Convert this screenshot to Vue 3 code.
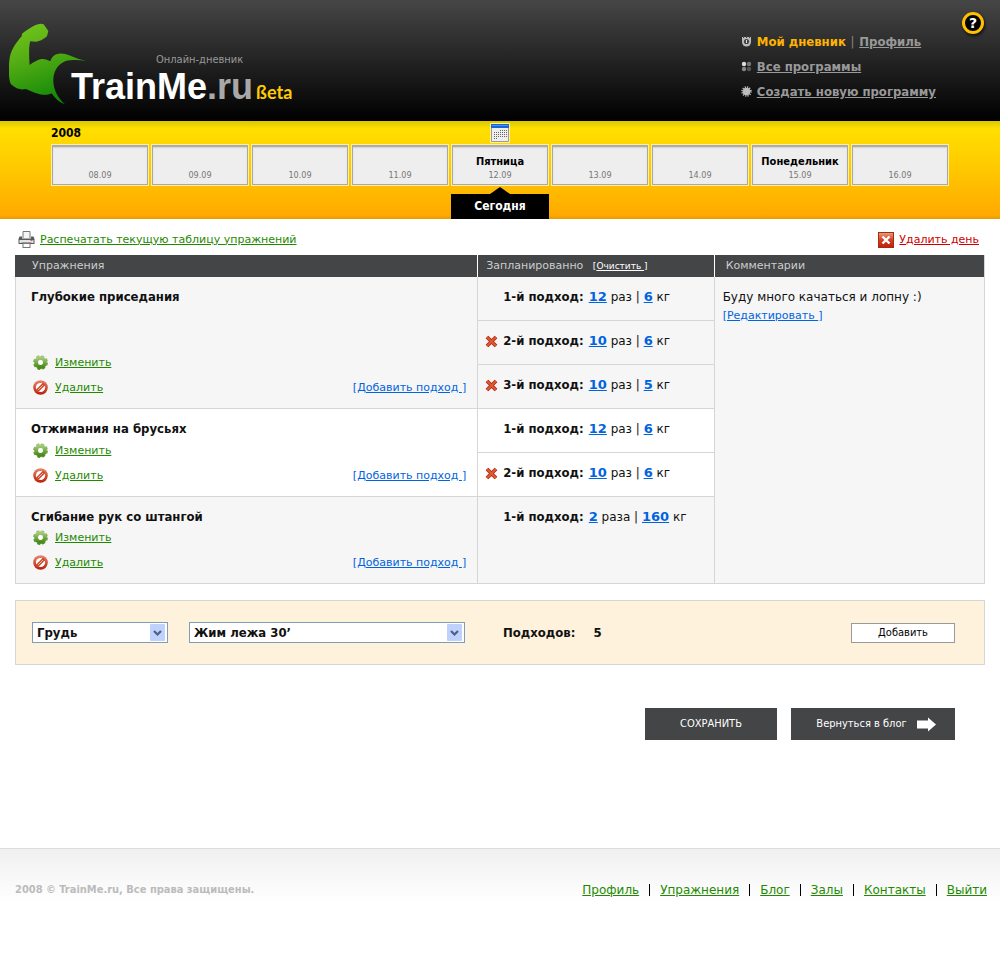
<script setup>
import { ref } from 'vue'

const days = [
  { date: '08.09' },
  { date: '09.09' },
  { date: '10.09' },
  { date: '11.09' },
  { date: '12.09', name: 'Пятница' },
  { date: '13.09' },
  { date: '14.09' },
  { date: '15.09', name: 'Понедельник' },
  { date: '16.09' },
]

const exercises = [
  {
    name: 'Глубокие приседания',
    sets: [
      { reps: 12, unit: 'раз', weight: 6 },
      { reps: 10, unit: 'раз', weight: 6 },
      { reps: 10, unit: 'раз', weight: 5 },
    ],
  },
  {
    name: 'Отжимания на брусьях',
    sets: [
      { reps: 12, unit: 'раз', weight: 6 },
      { reps: 10, unit: 'раз', weight: 6 },
    ],
  },
  {
    name: 'Сгибание рук со штангой',
    sets: [{ reps: 2, unit: 'раза', weight: 160 }],
  },
]

const rows = exercises.flatMap((exercise, e) =>
  exercise.sets.map((set, s) => ({
    exercise,
    set,
    number: s + 1,
    first: s === 0,
    white: e % 2 === 1,
    single: exercise.sets.length === 1,
  }))
)

const footerLinks = ['Профиль', 'Упражнения', 'Блог', 'Залы', 'Контакты', 'Выйти']

const group = ref('Грудь')
const exerciseName = ref('Жим лежа 30’')
const setCount = ref('5')
</script>

<template>
  <div class="page">
    <header class="header">
      <div class="logo">
        <svg class="arm" viewBox="28 38 234 246" aria-hidden="true">
          <defs>
            <linearGradient id="armFill" x1="0" y1="0" x2="0.3" y2="1">
              <stop offset="0" stop-color="#74c71c" />
              <stop offset="0.45" stop-color="#55ae14" />
              <stop offset="1" stop-color="#158a08" />
            </linearGradient>
          </defs>
          <path
            fill="url(#armFill)"
            d="M122 40 L132 42 L146 62 L142 78 C132 86 122 94 108 94 L92 93 C87 106 88 140 90 164 C100 156 112 150 124 146 C136 145 144 148 152 153 C156 140 164 131 178 130 C200 128 218 140 238 146 L260 152 C240 148 215 148 198 152 C172 162 160 186 161 214 C163 244 178 266 196 282 C180 276 165 264 156 249 C130 262 100 244 78 236 C64 240 50 236 34 222 C26 206 26 170 30 142 C36 112 54 92 66 78 L67 70 C88 54 106 42 122 40Z"
          />
        </svg>
        <div class="wordmark">
          <span class="tagline">Онлайн-дневник</span>
          <span class="name"><span>TrainMe<span class="zone">.ru</span></span><span class="beta">ßeta</span></span>
        </div>
      </div>

      <nav class="main-nav">
        <div class="nav-row">
          <svg class="nav-icon" viewBox="0 0 11 11">
            <path d="M1 1h9v5a4.500 4.500 0 0 1-9 0z" fill="#bbb" />
            <path d="M2.500 0v2M5.500 0v2M8.500 0v2" stroke="#444" />
            <circle cx="5.500" cy="5.500" r="2.600" fill="#444" />
            <path d="M5.500 4v3" stroke="#ddd" />
          </svg>
          <span><b class="current">Мой дневник</b><span class="bar"> | </span><a href="#">Профиль</a></span>
        </div>
        <div class="nav-row">
          <svg class="nav-icon" viewBox="0 0 11 11">
            <circle cx="3" cy="3" r="2.200" fill="#ddd" />
            <circle cx="8" cy="3" r="2.200" fill="#777" />
            <circle cx="3" cy="8" r="2.200" fill="#888" />
            <circle cx="8" cy="8" r="2.200" fill="#555" />
          </svg>
          <a href="#">Все программы</a>
        </div>
        <div class="nav-row">
          <svg class="nav-icon" viewBox="0 0 11 11">
            <circle cx="5.500" cy="5.500" r="3.800" fill="#bdbdbd" />
            <circle cx="5.500" cy="5.500" r="4.300" fill="none" stroke="#bdbdbd" stroke-width="2" stroke-dasharray="1.100 1.150" />
          </svg>
          <a href="#">Создать новую программу</a>
        </div>
      </nav>

      <a class="help" href="#" aria-label="Помощь">?</a>
    </header>

    <section class="calendar">
      <strong class="year">2008</strong>
      <button class="pick" type="button" aria-label="Календарь">
        <svg viewBox="0 0 20 20">
          <rect x="0" y="0" width="20" height="20" rx="1" fill="#fff3a0" />
          <rect x="1" y="1" width="18" height="17" fill="#eee" />
          <rect x="1" y="1" width="18" height="4" fill="#1766d8" />
          <rect x="2" y="2" width="16" height="1" fill="#4b92ec" />
          <path d="M1.500 5v13.500h17V5" fill="none" stroke="#999" />
          <path d="M10 7.500h7M4 9.500h13M4 11.500h13M4 13.500h13M4 15.500h3" stroke="#666" stroke-dasharray="1 1" />
        </svg>
      </button>
      <a v-for="day in days" :key="day.date" class="day" href="#">
        <b v-if="day.name">{{ day.name }}</b>
        <span>{{ day.date }}</span>
      </a>
      <strong class="today">Сегодня</strong>
    </section>

    <main class="content">
      <div class="tools">
        <a class="print" href="#">
          <svg viewBox="0 0 16 17">
            <path d="M4.500 7V0.500h7V7" fill="#f4f4f4" stroke="#777" />
            <path d="M1 5.500h2.500v2h9v-2H15L16 8v5H0V8z" fill="#5a5a5e" />
            <rect x="1" y="9" width="14" height="3" fill="#e4e4e6" />
            <rect x="12" y="9" width="2" height="1" fill="#d55" />
            <path d="M3 12h10" stroke="#555" />
            <rect x="4.500" y="12.500" width="7" height="4" fill="#fff" stroke="#777" />
          </svg>
          <span>Распечатать текущую таблицу упражнений</span>
        </a>
        <a class="drop-day" href="#">
          <svg viewBox="0 0 16 16">
            <defs>
              <linearGradient id="boxFill" x1="0" y1="0" x2="0" y2="1">
                <stop offset="0" stop-color="#e8a080" />
                <stop offset="0.500" stop-color="#cf4222" />
                <stop offset="1" stop-color="#c21e08" />
              </linearGradient>
            </defs>
            <rect x="0.500" y="0.500" width="15" height="15" fill="url(#boxFill)" stroke="#a52c10" />
            <path d="M4.500 4.500l7 7M11.500 4.500l-7 7" stroke="#fff" stroke-width="2.400" />
          </svg>
          <span>Удалить день</span>
        </a>
      </div>

      <table class="plan">
        <colgroup>
          <col class="c-exercise" />
          <col class="c-sets" />
          <col />
        </colgroup>
        <thead>
          <tr>
            <th class="h-exercise">Упражнения</th>
            <th class="h-sets">Запланированно <span class="clear">[<a href="#">Очистить </a>]</span></th>
            <th class="h-comment">Комментарии</th>
          </tr>
        </thead>
        <tbody>
          <tr v-for="(row, i) in rows" :key="i" :class="{ white: row.white }">
            <td v-if="row.first" class="exercise" :rowspan="row.exercise.sets.length">
              <div class="exercise-box">
                <b>{{ row.exercise.name }}</b>
                <div class="actions">
                  <a class="action" href="#">
                    <svg viewBox="0 0 16 16">
                      <defs>
                        <linearGradient id="gearFill" x1="0" y1="0" x2="0" y2="1">
                          <stop offset="0" stop-color="#a3c878" />
                          <stop offset="1" stop-color="#4b8a1c" />
                        </linearGradient>
                      </defs>
                      <circle cx="8" cy="8" r="6.900" fill="none" stroke="url(#gearFill)" stroke-width="2" stroke-dasharray="3.200 2.220" />
                      <circle cx="8" cy="8" r="4.600" fill="none" stroke="url(#gearFill)" stroke-width="4.400" />
                      <circle cx="8" cy="8" r="2.600" fill="#fff" />
                    </svg>
                    <span>Изменить</span>
                  </a>
                  <a class="action" href="#">
                    <svg viewBox="0 0 16 16">
                      <defs>
                        <linearGradient id="banFill" x1="0" y1="0" x2="0" y2="1">
                          <stop offset="0" stop-color="#e88a70" />
                          <stop offset="1" stop-color="#b81c04" />
                        </linearGradient>
                      </defs>
                      <circle cx="8" cy="8" r="7.800" fill="url(#banFill)" />
                      <circle cx="8" cy="8" r="4.900" fill="#fff" />
                      <path d="M4 12l8-8" stroke="#cf4a2c" stroke-width="3.400" />
                      <path d="M5.500 10.500l5-5" stroke="#f3c4b6" stroke-width="1" />
                    </svg>
                    <span>Удалить</span>
                  </a>
                  <span class="add-set">[<a href="#">Добавить подход </a>]</span>
                </div>
              </div>
            </td>
            <td class="set" :class="{ single: row.single }">
              <div class="set-line">
                <span class="set-drop">
                  <button v-if="!row.first" type="button" aria-label="Удалить подход">
                    <svg viewBox="0 0 13 13">
                      <path d="M2 2l9 9M11 2l-9 9" stroke="#b2290c" stroke-width="3.800" />
                      <path d="M2 2l9 9M11 2l-9 9" stroke="#dd5a36" stroke-width="2" />
                    </svg>
                  </button>
                </span>
                <b class="set-name">{{ row.number }}-й подход:</b>
                <span class="set-value"><a href="#">{{ row.set.reps }}</a> {{ row.set.unit }} | <a href="#">{{ row.set.weight }}</a> кг</span>
              </div>
            </td>
            <td v-if="i === 0" class="comment" :rowspan="rows.length">
              <p>Буду много качаться и лопну :)</p>
              <span class="edit">[<a href="#">Редактировать </a>]</span>
            </td>
          </tr>
        </tbody>
      </table>

      <form class="add-form" @submit.prevent>
        <span class="select group-select">
          <select v-model="group" aria-label="Группа мышц">
            <option>Грудь</option>
          </select>
          <svg viewBox="0 0 15 17"><rect width="15" height="17" rx="1" fill="#bfd2fc" /><path d="M4 7l3.500 3.500L11 7" fill="none" stroke="#4d6185" stroke-width="2.200" /></svg>
        </span>
        <span class="select exercise-select">
          <select v-model="exerciseName" aria-label="Упражнение">
            <option>Жим лежа 30’</option>
          </select>
          <svg viewBox="0 0 15 17"><rect width="15" height="17" rx="1" fill="#bfd2fc" /><path d="M4 7l3.500 3.500L11 7" fill="none" stroke="#4d6185" stroke-width="2.200" /></svg>
        </span>
        <label class="count">Подходов: <input v-model="setCount" type="text" /></label>
        <button class="add" type="submit">Добавить</button>
      </form>

      <div class="buttons">
        <button class="dark save" type="button">СОХРАНИТЬ</button>
        <button class="dark back" type="button">
          <span>Вернуться в блог</span>
          <svg viewBox="0 0 19 15"><path d="M0 3.500h11V0.500l8 7-8 7v-3H0z" fill="#fff" /></svg>
        </button>
      </div>
    </main>

    <footer class="footer">
      <strong>2008 © TrainMe.ru, Все права защищены.</strong>
      <nav class="footer-nav">
        <template v-for="(link, i) in footerLinks" :key="link">
          <i v-if="i" class="divider"></i>
          <a href="#">{{ link }}</a>
        </template>
      </nav>
    </footer>
  </div>
</template>

<style>
body {
  margin: 0;
  background: #fff;
}
</style>

<style scoped>
.page {
  min-height: 100vh;
  display: flex;
  flex-direction: column;
  font: 11px/14px "DejaVu Sans", Verdana, sans-serif;
  color: #111;
}

b,
strong {
  font-family: "DejaVu Sans Condensed", "DejaVu Sans", Tahoma, sans-serif;
}

svg {
  display: block;
  flex: none;
}

button {
  font-family: inherit;
  cursor: pointer;
}

.header {
  display: flex;
  align-items: flex-start;
  min-height: 121px;
  background: linear-gradient(#464646, #000);
}

.logo {
  display: flex;
  flex: 1;
  padding: 23px 0 0 9px;
}

.arm {
  width: 78px;
  height: 82px;
}

.wordmark {
  display: flex;
  flex-direction: column;
  margin-left: -16px;
  padding-top: 30px;
}

.tagline {
  padding-left: 85px;
  font: 11px/14px "DejaVu Sans Condensed", "DejaVu Sans", sans-serif;
  color: #999;
}

.name {
  display: flex;
  align-items: baseline;
  gap: 3px;
  font: bold 36px/40px "Liberation Sans", Arial, sans-serif;
  color: #fff;
}

.zone {
  color: #a8a8a8;
}

.beta {
  font: bold 18px/20px Lato, sans-serif;
  color: #fc0;
}

.main-nav {
  padding: 29px 26px 0 0;
  font: bold 13px/25px "DejaVu Sans Condensed", "DejaVu Sans", sans-serif;
}

.main-nav a {
  color: #999;
}

.nav-row {
  display: flex;
  align-items: center;
  gap: 5px;
}

.nav-icon {
  width: 11px;
  height: 11px;
}

.current {
  color: #ffb400;
}

.bar {
  padding: 0 1px;
  font-weight: normal;
  color: #888;
}

.help {
  box-sizing: border-box;
  width: 22px;
  height: 22px;
  margin: 12px 16px 0 0;
  border: 3px solid #ffc000;
  border-radius: 50%;
  background: #000;
  box-shadow: 1px 2px 3px #111;
  color: #fff;
  font: bold 14px/16px "DejaVu Sans", sans-serif;
  text-align: center;
  text-decoration: none;
}

.calendar {
  display: grid;
  grid-template-columns: repeat(9, minmax(0, 1fr));
  grid-template-rows: 19px 42px;
  gap: 2px;
  padding: 2px 51px 0;
  min-height: 96px;
  background: linear-gradient(#d8c800, #ffdf00 8px, #ffd000 35px, #ffb000 85px, #ffaa00 94px, #e89a00);
}

.year {
  grid-column: 1 / 5;
  font-size: 12px;
  line-height: 20px;
  color: #000;
}

.pick {
  grid-column: 5;
  justify-self: center;
  width: 20px;
  height: 20px;
  padding: 0;
  border: 0;
  background: none;
}

.day {
  grid-row: 2;
  box-sizing: border-box;
  display: flex;
  flex-direction: column;
  align-items: center;
  justify-content: flex-end;
  padding-bottom: 3px;
  border: 1px solid #fff0a0;
  background: #eee;
  box-shadow: inset 0 0 0 1px #a8a8a8, inset 0 2px 2px #999;
  color: #777;
  font: 9px/13px "DejaVu Sans Condensed", "DejaVu Sans", sans-serif;
  text-decoration: none;
}

.day b {
  color: #000;
  font-size: 11px;
  line-height: 15px;
}

.today {
  grid-column: 5;
  grid-row: 3;
  display: flex;
  flex-direction: column;
  align-items: center;
  margin-top: -1px;
  background: linear-gradient(#000, #000) 0 7px no-repeat;
  color: #fff;
  font-size: 12px;
  line-height: 25px;
}

.today::before {
  content: "";
  border: 10px solid transparent;
  border-top: 0;
  border-bottom: 7px solid #000;
}

.content {
  flex: 1;
  padding: 12px 15px 0;
}

.tools {
  display: flex;
  justify-content: space-between;
  padding: 0 6px 7px 3px;
}

.print,
.drop-day {
  display: flex;
  align-items: center;
  gap: 5px;
  color: #1f8a00;
}

.print svg {
  width: 17px;
  height: 17px;
}

.drop-day {
  color: #d00000;
}

.drop-day svg {
  width: 16px;
  height: 16px;
}

.plan {
  width: 100%;
  table-layout: fixed;
  border-collapse: separate;
  border-spacing: 0;
  border-right: 1px solid #d6d6d6;
}

.c-exercise {
  width: 47.7%;
}

.c-sets {
  width: 24.4%;
}

.plan th {
  height: 22px;
  padding: 0 0 0 8px;
  border-left: 1px solid #fff;
  background: #444547;
  color: #ccc;
  font-weight: normal;
  text-align: left;
}

.plan .h-exercise {
  padding-left: 16px;
  border-left-color: #444547;
}

.plan .h-comment {
  padding-left: 11px;
}

.clear {
  padding-left: 6px;
  font-size: 9px;
  color: #fff;
}

.clear a {
  color: #fff;
}

.plan td {
  height: 43px;
  padding: 0;
  border-left: 1px solid #d6d6d6;
  border-bottom: 1px solid #d6d6d6;
  background: #f6f6f6;
  vertical-align: top;
}

.plan .white td {
  background: #fff;
}

.exercise-box {
  box-sizing: border-box;
  display: flex;
  flex-direction: column;
  justify-content: space-between;
  height: 100%;
  padding: 12px 11px 8px 15px;
}

.exercise-box b,
.set-line {
  font-size: 13px;
  line-height: 16px;
}

.actions {
  display: grid;
  grid-template-columns: auto auto;
  grid-auto-rows: 25px;
  justify-content: space-between;
  align-items: center;
}

.action {
  grid-column: 1;
  display: flex;
  align-items: center;
  gap: 7px;
  padding-left: 2px;
  color: #1f8a00;
}

.action svg {
  width: 15px;
  height: 15px;
}

.add-set {
  grid-column: 2;
}

.add-set,
.add-set a,
.edit,
.edit a,
.set-line a {
  color: #0064e0;
}

.set-line {
  display: flex;
  align-items: center;
  padding: 12px 0 0 7px;
}

.plan .single {
  height: 86px;
}

.set-value {
  font-size: 12px;
}

.set-line a {
  font-size: 13px;
  font-weight: bold;
}

.set-drop {
  width: 18px;
}

.set-drop button {
  display: block;
  padding: 0;
  border: 0;
  background: none;
}

.set-drop svg {
  width: 13px;
  height: 13px;
}

.set-name {
  margin-right: 5px;
}

.plan .comment {
  padding: 12px 8px;
  background: #f6f6f6;
}

.comment p {
  margin: 0 0 4px;
  font-size: 12px;
  line-height: 16px;
}

.add-form {
  display: flex;
  align-items: center;
  margin-top: 16px;
  padding: 21px 29px 21px 16px;
  border: 1px solid #d6d6d6;
  background: #fff2dc;
  font: bold 13px/16px "DejaVu Sans Condensed", "DejaVu Sans", sans-serif;
}

.select {
  box-sizing: border-box;
  display: grid;
  grid-template-columns: 1fr 17px;
  align-items: center;
  height: 21px;
  border: 1px solid #7f9db9;
  background: #fff;
}

.select select {
  grid-area: 1 / 1 / 2 / 3;
  appearance: none;
  width: 100%;
  height: 19px;
  padding: 0 18px 0 4px;
  border: 0;
  background: none;
  color: #111;
  font: inherit;
}

.select svg {
  grid-area: 1 / 2;
  width: 15px;
  height: 17px;
  pointer-events: none;
}

.group-select {
  width: 136px;
  margin-right: 21px;
}

.exercise-select {
  width: 276px;
  margin-right: 38px;
}

.count {
  display: flex;
  gap: 18px;
}

.count input {
  width: 40px;
  padding: 0;
  border: 0;
  background: none;
  color: inherit;
  font: inherit;
}

.add {
  width: 104px;
  height: 20px;
  margin-left: auto;
  padding: 0;
  border: 1px solid #999;
  background: #fff;
  color: #000;
  font: 11px/16px "DejaVu Sans Condensed", "DejaVu Sans", sans-serif;
}

.buttons {
  display: flex;
  justify-content: flex-end;
  gap: 14px;
  margin: 43px 30px 0 0;
}

.dark {
  display: flex;
  align-items: center;
  justify-content: center;
  gap: 10px;
  height: 32px;
  padding: 0;
  border: 0;
  background: #444547;
  color: #fff;
  font: 11px/16px "DejaVu Sans Condensed", "DejaVu Sans", sans-serif;
}

.save {
  width: 132px;
}

.back {
  width: 164px;
  padding-left: 6px;
}

.back svg {
  width: 19px;
  height: 15px;
}

.footer {
  box-sizing: border-box;
  display: flex;
  align-items: flex-start;
  justify-content: space-between;
  min-height: 115px;
  padding: 32px 13px 0 15px;
  border-top: 1px solid #ddd;
  background: linear-gradient(#f0f0f0, #fff 54px);
}

.footer strong {
  line-height: 18px;
  color: #bbb;
}

.footer-nav {
  display: flex;
  align-items: center;
  gap: 10px;
  font-size: 12px;
  line-height: 18px;
}

.footer-nav a {
  color: #1f8a00;
}

.divider {
  width: 1px;
  height: 12px;
  background: #000;
}
</style>
